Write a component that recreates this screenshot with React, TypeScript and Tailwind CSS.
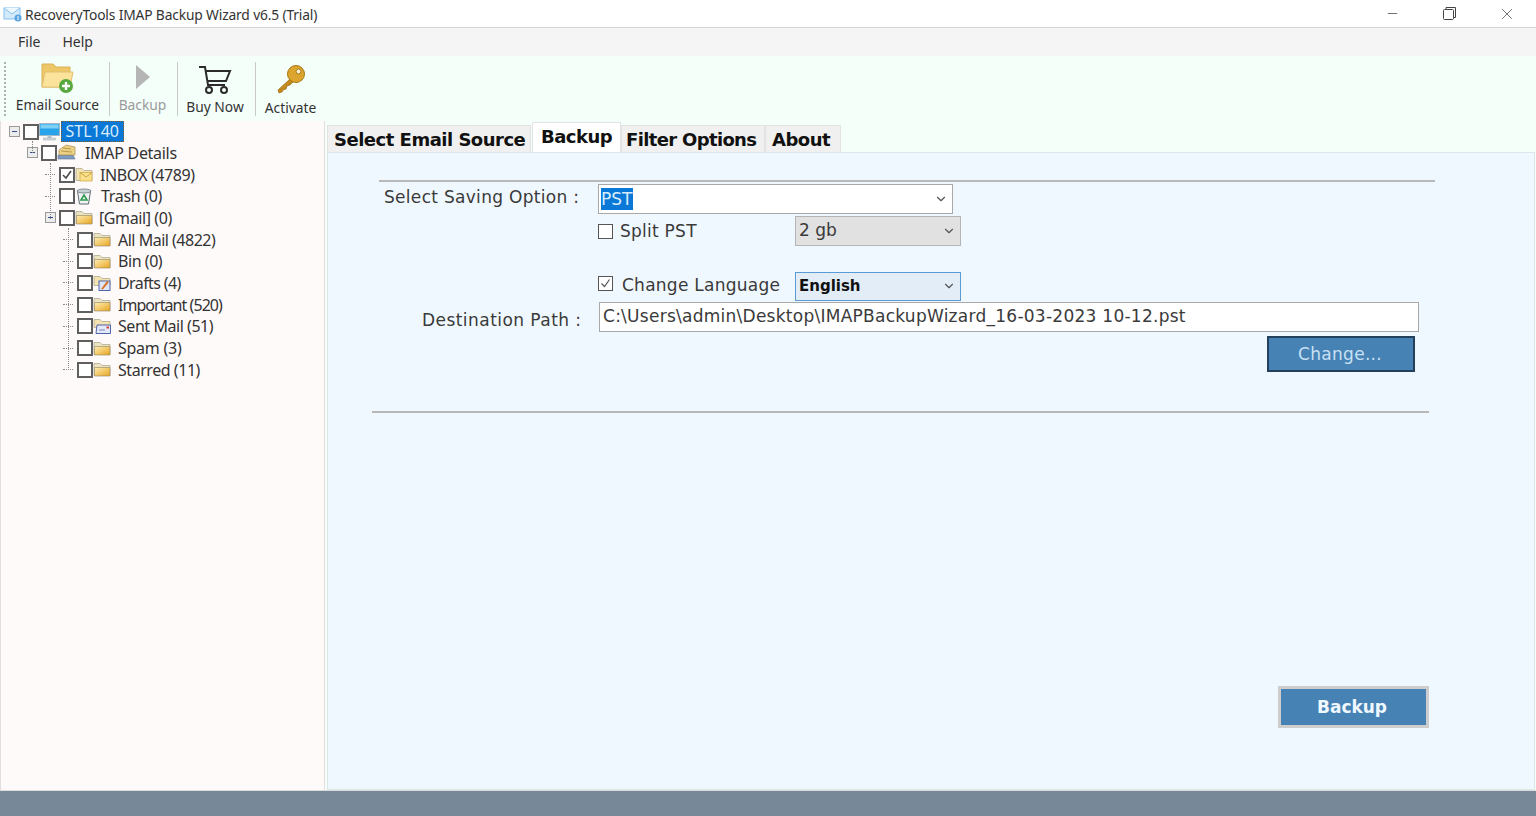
import { ChevronDown, Minus, X } from "lucide-react";

const uiFont = "font-['Noto_Sans','Open_Sans',sans-serif]";
const tahoma = "font-['DejaVu_Sans',Verdana,sans-serif]";

function AppIcon() {
  return (
    <svg width="19" height="17" viewBox="0 0 19 17">
      <rect x="1" y="3" width="16" height="11" fill="#d3eafb" stroke="#84c0ee" />
      <path d="M1 3l8 6 8-6" fill="#eef8fe" stroke="#84c0ee" />
      <circle cx="15" cy="13" r="3.5" fill="#5aa5e0" />
      <rect x="14.5" y="11" width="1" height="4" fill="#fff" />
    </svg>
  );
}

function EmailSourceIcon() {
  return (
    <svg width="36" height="32" viewBox="0 0 36 32">
      <path d="M2 3h11l3 3h14v20H2z" fill="#eec768" stroke="#d9b055" />
      <path d="M2 26l3-15h28l-3 15z" fill="#fbe39c" stroke="#e3c070" />
      <circle cx="26" cy="25" r="7" fill="#57a83e" />
      <path d="M26 21v8M22 25h8" stroke="#fff" strokeWidth="2.4" />
    </svg>
  );
}

function BackupIcon() {
  return (
    <svg width="18" height="26" viewBox="0 0 18 26">
      <path d="M2 1l14 12L2 25z" fill="#b5b5b5" />
    </svg>
  );
}

function CartIcon() {
  return (
    <svg width="34" height="29" viewBox="0 0 34 29" fill="none" stroke="#2b2b2b" strokeWidth="2">
      <path d="M1 2h6l3 18h17" />
      <path d="M8 6h24l-4 10H10" />
      <circle cx="11" cy="25" r="3" />
      <circle cx="26" cy="25" r="3" />
    </svg>
  );
}

function KeyIcon() {
  return (
    <svg width="32" height="32" viewBox="0 0 32 32">
      <path d="M15 15L3 26l1 3 3-1 1-2 3-1 1-3 3-1 4-4z" fill="#c48a1e" stroke="#9c6c12" strokeWidth="0.7" />
      <circle cx="21" cy="10" r="8.5" fill="#dba52e" stroke="#a87616" />
      <circle cx="23.5" cy="7.5" r="2.4" fill="#fbeec4" stroke="#8a5f10" strokeWidth="0.7" />
    </svg>
  );
}

function FolderGradient() {
  return (
    <svg width="0" height="0" className="absolute">
      <defs>
        <linearGradient id="folder-fill" x1="0" y1="0" x2="1" y2="1">
          <stop offset="0" stopColor="#fdeeb5" />
          <stop offset="1" stopColor="#e9a51f" />
        </linearGradient>
      </defs>
    </svg>
  );
}

function Folder() {
  return (
    <svg width="18" height="15" viewBox="0 0 18 15" className="shrink-0">
      <path d="M1 1.5h6l2 2h8v10H1z" fill="#ece3c0" stroke="#a8a08a" strokeWidth="0.7" />
      <path d="M1.5 5.5h15.5v8.5H1.5z" fill="url(#folder-fill)" stroke="#8f8465" strokeWidth="0.6" />
    </svg>
  );
}

function TreeIcon({ kind }: { kind: string }) {
  if (kind === "computer") {
    return (
      <svg width="21" height="18" viewBox="0 0 21 18" className="shrink-0">
        <rect x="0.5" y="0.5" width="20" height="12" fill="#29a4ea" stroke="#a0b8c8" />
        <rect x="1.5" y="1.5" width="18" height="4" fill="#7fd0f5" />
        <rect x="8.5" y="12.5" width="4" height="2.5" fill="#b8c4cc" />
        <rect x="4.5" y="15" width="12" height="2" fill="#d5dce0" stroke="#9aa6ae" strokeWidth="0.5" />
      </svg>
    );
  }
  if (kind === "imap") {
    return (
      <svg width="20" height="17" viewBox="0 0 20 17" className="shrink-0">
        <path d="M1 11h15l2 4H1z" fill="#7f9cc4" stroke="#5a6f90" strokeWidth="0.6" />
        <path d="M2 6l7-5 9 2v8H2z" fill="#ecd084" stroke="#a89050" strokeWidth="0.7" />
        <path d="M6 4l8 1M4 7l11 1" stroke="#b89b52" />
      </svg>
    );
  }
  if (kind === "trash") {
    return (
      <svg width="18" height="17" viewBox="0 0 18 17" className="shrink-0">
        <path d="M2.5 3h13l-2 13h-9z" fill="#f0f3f3" stroke="#5f6d73" />
        <ellipse cx="9" cy="3" rx="7" ry="2" fill="#c6d0d4" stroke="#5f6d73" strokeWidth="0.7" />
        <path d="M9 7l3 5H6z" fill="none" stroke="#2f9a52" strokeWidth="1.6" />
      </svg>
    );
  }
  if (kind === "inbox") {
    return (
      <svg width="18" height="15" viewBox="0 0 18 15" className="shrink-0">
        <path d="M1 1.5h6l2 2h8v10H1z" fill="#f2e3b0" stroke="#a8a08a" strokeWidth="0.7" />
        <rect x="5" y="5.5" width="12" height="8.5" fill="#fbe08b" stroke="#c9a540" strokeWidth="0.7" />
        <path d="M5 5.5l6 4.5 6-4.5" fill="none" stroke="#c9a540" />
      </svg>
    );
  }
  if (kind === "drafts") {
    return (
      <svg width="18" height="16" viewBox="0 0 18 16" className="shrink-0">
        <path d="M1 1.5h6l2 2h8v7H1z" fill="#f2e3b0" stroke="#a8a08a" strokeWidth="0.7" />
        <rect x="6" y="6" width="11" height="9.5" fill="#dfe6f8" stroke="#3f55a0" strokeWidth="0.9" />
        <path d="M8 14l6-8 1.8 1.5-6 7z" fill="#d8762c" />
      </svg>
    );
  }
  if (kind === "sent") {
    return (
      <svg width="18" height="16" viewBox="0 0 18 16" className="shrink-0">
        <path d="M1 1.5h6l2 2h8v6H1z" fill="#f2e3b0" stroke="#a8a08a" strokeWidth="0.7" />
        <path d="M4 7h13.5v8.5H3z" fill="#e4e9fa" stroke="#3f55a0" strokeWidth="0.9" />
        <path d="M6 12h6" stroke="#7888c0" />
        <rect x="13.5" y="8.5" width="2.5" height="2" fill="#d04040" />
      </svg>
    );
  }
  return <Folder />;
}

function TreeBox({ checked }: { checked?: boolean }) {
  return (
    <span className="flex h-[16px] w-[16px] shrink-0 items-center justify-center border-2 border-[#5f5f5f] bg-white">
      {checked && (
        <svg width="12" height="12" viewBox="0 0 12 12" fill="none" stroke="#4a4a4a" strokeWidth="1.6">
          <path d="M2 6l3 3 5-7" />
        </svg>
      )}
    </span>
  );
}

function Expander() {
  return (
    <span className="flex h-[11px] w-[11px] shrink-0 items-center justify-center border border-[#9a9a9a] bg-[#ececec]">
      <span className="h-px w-[5px] bg-[#33508a]" />
    </span>
  );
}

const treeRows = [
  { label: "STL140", indent: 8, icon: "computer", expander: true, selected: true, text: "" },
  { label: "IMAP Details", indent: 26, icon: "imap", expander: true, text: "ml-[8px] tracking-[-0.3px]" },
  { label: "INBOX (4789)", indent: 44, icon: "inbox", checked: true, text: "ml-[7px] tracking-[-0.45px]" },
  { label: "Trash (0)", indent: 44, icon: "trash", text: "ml-[8px] tracking-[-0.3px]" },
  { label: "[Gmail] (0)", indent: 44, icon: "folder", expander: true, text: "ml-[6px] tracking-[-0.4px]" },
  { label: "All Mail (4822)", indent: 62, icon: "folder", text: "ml-[7px] tracking-[-0.5px]" },
  { label: "Bin (0)", indent: 62, icon: "folder", text: "ml-[7px] tracking-[-0.45px]" },
  { label: "Drafts (4)", indent: 62, icon: "drafts", text: "ml-[7px] tracking-[-0.6px]" },
  { label: "Important (520)", indent: 62, icon: "folder", text: "ml-[7px] tracking-[-0.95px]" },
  { label: "Sent Mail (51)", indent: 62, icon: "sent", text: "ml-[7px] tracking-[-0.45px]" },
  { label: "Spam (3)", indent: 62, icon: "folder", text: "ml-[7px] tracking-[-0.25px]" },
  { label: "Starred (11)", indent: 62, icon: "folder", text: "ml-[7px] tracking-[-0.45px]" },
];

function TreeRow({ row }: { row: (typeof treeRows)[number] }) {
  return (
    <div
      className={`flex ${row.selected ? "h-[21px]" : "h-[21.7px]"} items-center`}
      style={{ paddingLeft: row.indent }}
    >
      {row.expander ? <Expander /> : <span className="mr-[1px] h-0 w-[10px] border-t border-dotted border-[#8a8a8a]" />}
      <span className="w-[3px]" />
      <TreeBox checked={row.checked} />
      <TreeIcon kind={row.icon} />
      {row.selected ? (
        <span className="ml-[1px] border border-dotted border-[#8a5a20] bg-[#0a78d7] px-[3.5px] text-[16px] leading-[19px] text-[#d7ecfb]">
          {row.label}
        </span>
      ) : (
        <span className={`${row.text} text-[16px] text-[#333]`}>{row.label}</span>
      )}
    </div>
  );
}

function Tab({
  label,
  active,
  width,
  pad = "pl-[6px]",
}: {
  label: string;
  active?: boolean;
  width: string;
  pad?: string;
}) {
  return (
    <div
      className={
        active
          ? `${width} -mt-[2px] h-[31px] border border-b-0 border-[#e3e3e3] bg-white pl-[8px] text-[18px] font-bold leading-[27px] text-[#111]`
          : `${width} ${pad} mt-[1px] h-[28px] border border-b-0 border-[#e3e3e3] bg-[#f0f0f0] text-[18px] font-bold leading-[28px] text-[#111]`
      }
    >
      {label}
    </div>
  );
}

function ToolButton({
  label,
  width,
  disabled,
  low,
  children,
}: {
  label: string;
  width: string;
  disabled?: boolean;
  low?: boolean;
  children: React.ReactNode;
}) {
  return (
    <div className={`${width} flex h-[56px] flex-col items-center`}>
      <div className={`${low ? "mt-[3px]" : ""} flex h-[33px] items-center`}>{children}</div>
      <span
        className={`${low ? "mt-[2px]" : "mt-[1px]"} text-[13.8px] leading-[20px] ${
          disabled ? "text-[#9a9a9a]" : "text-[#333]"
        }`}
      >
        {label}
      </span>
    </div>
  );
}

function Separator() {
  return <div className="h-[54px] w-px shrink-0 bg-[#c9c9c9]" />;
}

export default function App() {
  return (
    <div className={`flex h-[816px] w-[1536px] flex-col overflow-hidden bg-white ${uiFont}`}>
      <FolderGradient />
      {/* title bar */}
      <div className="flex h-[28px] shrink-0 items-center border-b border-[#d4d4d4] bg-white pl-[3px]">
        <AppIcon />
        <span className="ml-[3px] mt-[3px] text-[13.8px] tracking-[-0.15px] text-[#333]">
          RecoveryTools IMAP Backup Wizard v6.5 (Trial)
        </span>
        <div className="ml-auto flex items-center text-[#444]">
          <Minus size={15} strokeWidth={1.2} className="mr-[43px]" />
          <svg width="13" height="13" viewBox="0 0 13 13" fill="none" stroke="#444" className="mr-[42px]">
            <rect x="0.5" y="2.5" width="10" height="10" rx="1" />
            <path d="M3 2.5V0.5h9.5v10h-2" />
          </svg>
          <X size={18} strokeWidth={1} className="mr-[20px]" />
        </div>
      </div>

      {/* menu */}
      <div className="flex h-[28px] shrink-0 items-center gap-[22px] bg-[#f5f5f5] pb-[1px] pl-[18px] text-[14px] text-[#333]">
        <span>File</span>
        <span>Help</span>
      </div>

      {/* toolbar */}
      <div className="flex h-[65px] shrink-0 items-center bg-[#f5fffa] pl-[4px]">
        <div className="h-[54px] w-0 border-l-2 border-dotted border-[#b0b0b0]" />
        <ToolButton label="Email Source" width="w-[103px]">
          <EmailSourceIcon />
        </ToolButton>
        <Separator />
        <ToolButton label="Backup" width="w-[67px] pr-[2px]" disabled>
          <BackupIcon />
        </ToolButton>
        <Separator />
        <ToolButton label="Buy Now" width="w-[77px] pr-[3px]" low>
          <CartIcon />
        </ToolButton>
        <Separator />
        <ToolButton label="Activate" width="w-[70px] pr-[1px]" low>
          <KeyIcon />
        </ToolButton>
      </div>

      {/* body */}
      <div className="flex min-h-0 flex-1">
        <div className="relative w-[325px] shrink-0 border-x border-[#e3dddd] bg-[#fffafa] text-[#333]">
          {/* tree connector lines */}
          <span className="absolute left-[31px] top-[20px] h-[12px] border-l border-dotted border-[#8a8a8a]" />
          <span className="absolute left-[49px] top-[42px] h-[56px] border-l border-dotted border-[#8a8a8a]" />
          <span className="absolute left-[67px] top-[107px] h-[142px] border-l border-dotted border-[#8a8a8a]" />
          {treeRows.map((row) => (
            <TreeRow key={row.label} row={row} />
          ))}
        </div>

        <div className={`flex min-w-0 flex-1 flex-col bg-[#f5fffa] pl-[2px] ${tahoma}`}>
          <div className="flex h-[31px] shrink-0 items-start pt-[3px] tracking-[-0.5px]">
            <Tab label="Select Email Source" width="w-[204px]" />
            <div className="w-px" />
            <Tab label="Backup" active width="w-[89px]" />
            <Tab label="Filter Options" pad="pl-[4px] tracking-[-0.65px]" width="w-[144px]" />
            <Tab label="About" width="w-[76px]" />
          </div>

          <div className="mr-[1px] flex flex-1 flex-col border border-[#dfe6ea] bg-[#f0f8ff] pl-[44px] pr-[100px] pt-[27px] text-[#3a3a3a]">
            <div className="ml-[7px] -mr-[1px] h-[2px] bg-[#b8b8b8]" />

            <div className="mt-[2px] flex h-[30px] items-center">
              <span className="mb-[2px] w-[209px] pl-[12px] text-[17px] tracking-[0.3px]">Select Saving Option&nbsp;:</span>
              <div className="ml-[17px] flex h-[30px] w-[355px] items-center justify-between border border-[#a8a8a8] bg-white pl-[2px] pr-[4px]">
                <span className="bg-[#0a78d7] pr-[1px] text-[17px] leading-[22px] text-[#d7ecfb]">PST</span>
                <ChevronDown size={14} className="text-[#555]" />
              </div>
            </div>

            <div className="mt-[2px] flex h-[30px] items-center pl-[226px]">
              <span className="h-[15px] w-[15px] border border-[#555] bg-white" />
              <span className="ml-[7px] mt-[2px] w-[175px] text-[17px] tracking-[0.25px]">Split PST</span>
              <div className="flex h-[30px] w-[166px] items-center justify-between border border-[#b5b5b5] bg-[#e1e1e1] pl-[3px] pr-[4px]">
                <span className="text-[17px]">2 gb</span>
                <ChevronDown size={14} className="text-[#555]" />
              </div>
            </div>

            <div className="mt-[25px] flex h-[30px] items-center pl-[226px]">
              <span className="-mt-[5px] flex h-[15px] w-[15px] items-center justify-center border border-[#555] bg-white">
                <svg width="13" height="13" viewBox="0 0 13 13" fill="none" stroke="#555" strokeWidth="1.2">
                  <path d="M2.5 6.5l3 3 5-7" />
                </svg>
              </span>
              <span className="mb-[1px] ml-[9px] w-[173px] text-[17px] tracking-[0.25px]">Change Language</span>
              <div className="flex h-[29px] w-[166px] items-center justify-between border border-[#5b9bd5] bg-[#e2edf7] pl-[3px] pr-[4px]">
                <span className="pt-[1px] text-[15px] font-bold text-[#111]">English</span>
                <ChevronDown size={14} className="text-[#555]" />
              </div>
            </div>

            <div className="mt-[1px] flex h-[30px] items-center">
              <span className="mt-[8px] w-[209px] pl-[50px] text-[17px] tracking-[0.45px]">Destination&nbsp;Path&nbsp;:</span>
              <div className="ml-[18px] flex h-[30px] w-[820px] items-center border border-[#a8a8a8] bg-white pl-[3px] text-[17px] tracking-[0.26px]">
                C:\Users\admin\Desktop\IMAPBackupWizard_16-03-2023 10-12.pst
              </div>
            </div>

            <div className="mt-[4px] flex justify-end pr-[19px]">
              <button className="h-[36px] w-[148px] border-2 border-[#23405c] bg-[#4682b4] pt-[2px] pr-[2px] text-[17px] tracking-[0.3px] text-[#c8e1f5]">
                Change...
              </button>
            </div>

            <div className="mt-[39px] mr-[5px] h-[2px] bg-[#b8b8b8]" />

            <div className="mt-[273px] flex justify-end pr-[5px]">
              <button className="h-[42px] w-[151px] border-[3px] border-[#cdcdcd] bg-[#4682b4] pt-[2px] pr-[3px] text-[17px] font-bold text-[#f0f8ff]">
                Backup
              </button>
            </div>
          </div>
        </div>
      </div>

      {/* status bar */}
      <div className="h-[26px] shrink-0 border-t border-[#dcdcdc] bg-[#778899]" />
    </div>
  );
}
